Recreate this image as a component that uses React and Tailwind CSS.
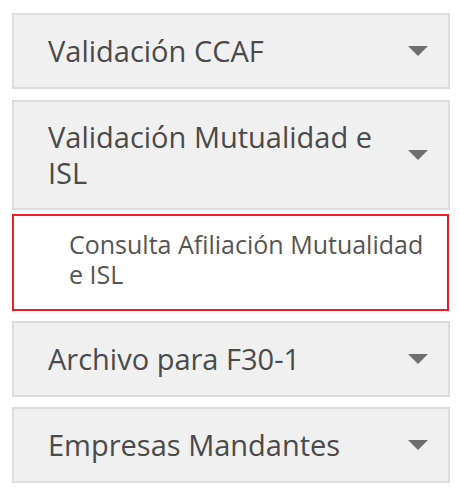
const font = { fontFamily: '"Open Sans", "Noto Sans", sans-serif' };

function Caret() {
  return (
    <svg width="20" height="10" viewBox="0 0 20 10" className="shrink-0">
      <polygon points="0,0 20,0 10,10" fill="#6e6e6e" />
    </svg>
  );
}

function Header({ title, tall }) {
  return (
    <div
      className={`flex items-center justify-between border-2 border-[#dcdcdc] bg-[#f0f0f0] pl-[34px] pr-[20px] ${
        tall ? "h-[110px]" : "h-[76px]"
      }`}
    >
      <span className="w-[340px] text-[29px] leading-[36px] text-[#4a4a4a]">{title}</span>
      <Caret />
    </div>
  );
}

export default function App() {
  return (
    <div className="min-h-screen bg-white" style={font}>
      <div className="flex w-[450px] flex-col pl-[12px] pt-[13px]">
        <Header title="Validación CCAF" />
        <div className="mt-[11px]">
          <Header title="Validación Mutualidad e ISL" tall />
        </div>
        <div className="mt-[4px] mr-[1px] h-[97px] border-2 border-[#ee1c25] bg-white pl-[55px] pr-[12px] pt-[13px]">
          <span className="block text-[25px] leading-[30px] text-[#555]">
            Consulta Afiliación Mutualidad e ISL
          </span>
        </div>
        <div className="mt-[10px]">
          <Header title="Archivo para F30-1" />
        </div>
        <div className="mt-[10px]">
          <Header title="Empresas Mandantes" />
        </div>
      </div>
    </div>
  );
}
